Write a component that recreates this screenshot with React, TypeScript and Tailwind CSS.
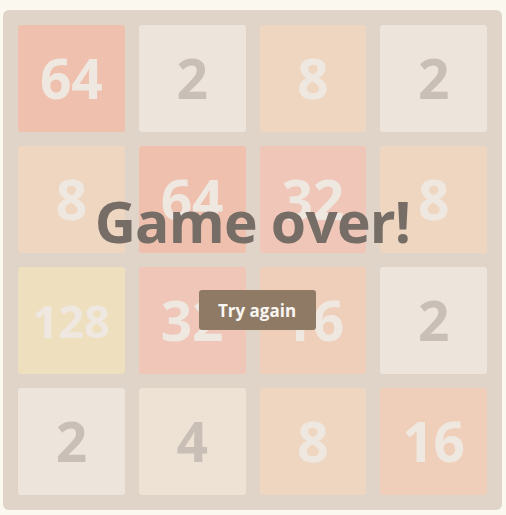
import React from 'react';

type Tile = { value: number; bg: string; fg: string; size: string };

const style = (v: number): Tile => {
  switch (v) {
    case 2:
      return { value: v, bg: 'bg-[#ede4db]', fg: 'text-[#c9bfb6]', size: 'text-[55px]' };
    case 4:
      return { value: v, bg: 'bg-[#ede2d3]', fg: 'text-[#c9bfb6]', size: 'text-[55px]' };
    case 8:
      return { value: v, bg: 'bg-[#efd6c0]', fg: 'text-[#efe8e1]', size: 'text-[55px]' };
    case 16:
      return { value: v, bg: 'bg-[#efcfb9]', fg: 'text-[#efe8e1]', size: 'text-[55px]' };
    case 32:
      return { value: v, bg: 'bg-[#efc6b7]', fg: 'text-[#efe8e1]', size: 'text-[55px]' };
    case 64:
      return { value: v, bg: 'bg-[#efc0ad]', fg: 'text-[#efe8e1]', size: 'text-[55px]' };
    default:
      return { value: v, bg: 'bg-[#eedfbf]', fg: 'text-[#efe8e1]', size: 'text-[45px]' };
  }
};

const grid = [
  [64, 2, 8, 2],
  [8, 64, 32, 8],
  [128, 32, 16, 2],
  [2, 4, 8, 16],
];

export default function App() {
  return (
    <div
      className="min-h-screen w-full bg-[#fbf8ef] pl-[3px] pt-[10px]"
      style={{ fontFamily: '"Open Sans", "Liberation Sans", sans-serif' }}
    >
      <div className="relative w-[499px] h-[500px] rounded-[6px] bg-[#e0d4c9]">
        <div className="grid grid-cols-4 grid-rows-4 gap-[14px] p-[15px] w-full h-full">
          {grid.flat().map((v, i) => {
            const t = style(v);
            return (
              <div
                key={i}
                className={`flex items-center justify-center rounded-[3px] font-bold ${t.bg} ${t.fg} ${t.size}`}
              >
                {t.value}
              </div>
            );
          })}
        </div>

        {/* game over overlay */}
        <div className="absolute inset-0 flex flex-col items-center justify-center">
          <div className="text-[57px] leading-[60px] font-bold text-[#766e66] tracking-[-0.8px]">
            Game over!
          </div>
          <button className="mt-[39px] ml-[9px] h-[40px] w-[117px] rounded-[3px] bg-[#8f7a65] pt-[2px] text-[17px] font-bold text-[#f9f6f2]">
            Try again
          </button>
        </div>
      </div>
    </div>
  );
}
